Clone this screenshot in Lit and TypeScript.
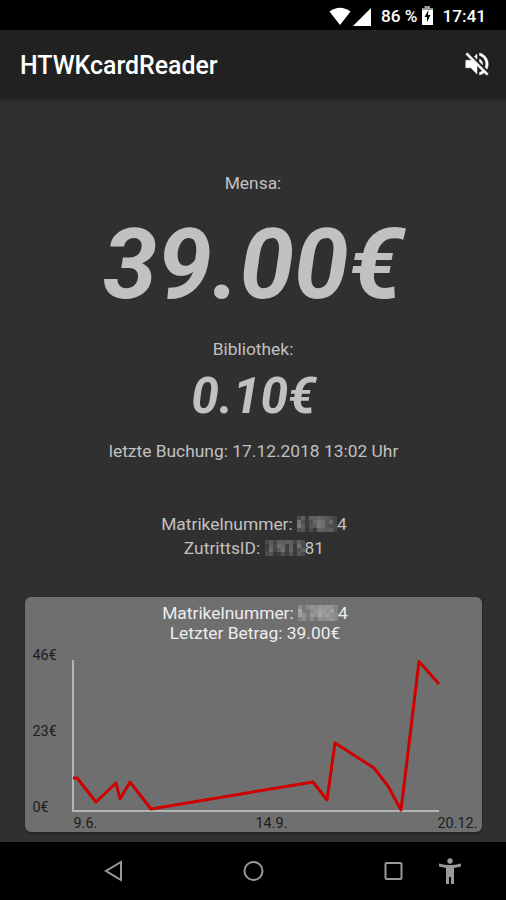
import { LitElement, html, svg, css } from "lit";
import { customElement, property } from "lit/decorators.js";

@customElement("pixel-mask")
class PixelMask extends LitElement {
  static styles = css`
    :host { display: inline-block; vertical-align: top; }
    svg { display: block; filter: blur(0.6px); }
  `;
  @property({ attribute: false }) rows: number[][] = [];
  @property({ type: Number }) cell = 4;
  render() {
    const w = (this.rows[0]?.length ?? 0) * this.cell;
    const h = this.rows.length * this.cell;
    return html`<svg width=${w} height=${h} viewBox="0 0 ${w} ${h}" shape-rendering="crispEdges">
      ${this.rows.map((r, y) => r.map((v, x) => svg`<rect x=${x * this.cell} y=${y * this.cell} width=${this.cell} height=${this.cell} fill="rgb(${v},${v},${v})"></rect>`))}
    </svg>`;
  }
}

const maskNumber = [
  [75, 95, 60, 95, 95, 105, 95, 90, 80, 70],
  [115, 80, 60, 80, 105, 115, 110, 85, 105, 70],
  [120, 95, 60, 85, 90, 120, 110, 85, 80, 75],
  [80, 85, 55, 75, 60, 100, 95, 90, 95, 70],
];
const maskAccess = [
  [75, 90, 70, 95, 90, 95, 95, 70, 95, 80],
  [60, 95, 75, 110, 100, 65, 95, 60, 110, 75],
  [65, 105, 70, 90, 110, 65, 100, 60, 80, 95],
  [75, 85, 55, 60, 80, 60, 85, 60, 90, 75],
];
const maskCard = [
  [140, 120, 140, 150, 140, 150, 145, 150, 145, 130],
  [165, 125, 120, 140, 150, 160, 155, 145, 160, 130],
  [160, 145, 125, 150, 145, 165, 150, 155, 145, 140],
  [130, 145, 120, 140, 120, 145, 140, 145, 150, 135],
];

@customElement("app-root")
class AppRoot extends LitElement {
  static styles = css`
    :host {
      display: flex; flex-direction: column; width: 506px; height: 900px; overflow: hidden;
      background: #303030; color: #c1c1c1; font-family: Roboto, "Liberation Sans", sans-serif;
      font-size: 17.4px; line-height: 20px;
    }
    svg { display: block; }
    .status {
      height: 30px; flex: none; background: #000; color: #fff; display: flex; align-items: center;
      justify-content: flex-end; box-sizing: border-box; padding: 1px 20px 0 0; font-weight: 500;
      font-size: 17.2px;
    }
    .signals { margin-right: 8px; }
    .battery { margin: 0 8px 0 4px; }
    .bar {
      height: 69px; flex: none; background: #212121; color: #fff; display: flex; align-items: center;
      justify-content: space-between; box-sizing: border-box; padding: 2px 14px 0 20px;
      box-shadow: 0 1px 3px rgba(0, 0, 0, 0.3);
    }
    .title { font-size: 24.9px; line-height: 30px; font-weight: 500; }
    .mute { margin-bottom: 4px; }
    .content { flex: 1; display: flex; flex-direction: column; align-items: center; padding-top: 74px; }
    .line { white-space: pre; display: flex; justify-content: center; }
    .mask { margin-top: 2px; }
    .amount { font-weight: 700; font-style: italic; white-space: nowrap; }
    .big { font-size: 98px; line-height: 110px; margin-top: 17px; }
    .small { font-size: 49.6px; line-height: 60px; margin-top: 7px; padding-left: 1px; }
    .library { margin-top: 19px; }
    .last { margin-top: 15px; padding-left: 1px; }
    .ids { margin-top: 51px; line-height: 24px; padding-left: 2px; }
    .ids .mask { margin-top: 4px; }
    .card {
      width: 457px; height: 235px; box-sizing: border-box; margin-top: 37px; border-radius: 6px;
      background: #6f6f6f; color: #ededed; padding-top: 6px; box-shadow: 0 1px 3px rgba(0, 0, 0, 0.4);
    }
    .card .line { padding-left: 4px; }
    .plot { display: grid; grid-template-columns: 48px 366px 43px; grid-template-rows: 153px 20px; margin-top: 17px; color: #1c1c1c; font-size: 14.4px; line-height: 18px; }
    .scale { display: flex; flex-direction: column; justify-content: space-between; padding-left: 8px; margin: -13px 0 -4px; }
    .chart { overflow: visible; grid-column: 2 / 4; }
    .dates { grid-column: 2 / 4; display: flex; justify-content: space-between; padding: 2px 4px 0 1px; white-space: nowrap; }
    .middle { margin-left: 8px; }
    .nav { flex: none; height: 58px; background: #000; }
  `;

  render() {
    return html`
      <div class="status">
        <svg class="signals" width="44" height="20" viewBox="0 0 44 20" fill="#fff">
          <path d="M0.5 5.5Q11 -2 21.5 5.5L11 19Z"></path>
          <path d="M42 2V20H24Z"></path>
        </svg>
        <span>86 %</span>
        <svg class="battery" width="13" height="19" viewBox="0 0 13 19">
          <path fill="#999" d="M3.5 0H9V2H12V5H1V2H3.5Z"></path>
          <path fill="#fff" d="M1 4H12V19H1Z"></path>
          <path fill="#000" d="M7.5 4L3.5 11H6V16L9.5 9H7Z"></path>
        </svg>
        <span>17:41</span>
      </div>
      <div class="bar">
        <div class="title">HTWKcardReader</div>
        <svg class="mute" width="30" height="30" viewBox="0 0 24 24" fill="#fff" stroke="#fff" stroke-width="0.35">
          <path d="M16.5 12c0-1.77-1.02-3.29-2.5-4.03v2.21l2.45 2.45c.03-.2.05-.41.05-.63zm2.5 0c0 .94-.2 1.82-.54 2.64l1.51 1.51C20.63 14.91 21 13.5 21 12c0-4.28-2.99-7.86-7-8.77v2.06c2.89.86 5 3.54 5 6.71zM4.27 3L3 4.27 7.73 9H3v6h4l5 5v-6.73l4.25 4.25c-.67.52-1.42.93-2.25 1.18v2.06c1.38-.31 2.63-.95 3.69-1.81L19.73 21 21 19.73l-9-9L4.27 3zM12 4L9.91 6.09 12 8.18V4z"></path>
        </svg>
      </div>
      <div class="content">
        <div>Mensa:</div>
        <div class="amount big">39.00€</div>
        <div class="library">Bibliothek:</div>
        <div class="amount small">0.10€</div>
        <div class="last">letzte Buchung: 17.12.2018 13:02 Uhr</div>
        <div class="ids">
          <div class="line">Matrikelnummer: <pixel-mask class="mask" .rows=${maskNumber}></pixel-mask>4</div>
          <div class="line">ZutrittsID: <pixel-mask class="mask" .rows=${maskAccess}></pixel-mask>81</div>
        </div>
        <div class="card">
          <div class="line">Matrikelnummer: <pixel-mask class="mask" .rows=${maskCard}></pixel-mask>4</div>
          <div class="line">Letzter Betrag: 39.00€</div>
          <div class="plot">
            <div class="scale"><span>46€</span><span>23€</span><span>0€</span></div>
            <svg class="chart" width="409" height="153" viewBox="0 0 409 153" fill="none">
              <path stroke="#b4b4b4" stroke-width="2" d="M0 0V151H366"></path>
              <path stroke="#cf0000" stroke-width="3" stroke-linejoin="round" d="M0 118H4L23 142L43 123L47 139L57 122L78 149L240 122L254 140L262 83L301 108L315 126L328 150L346 1.5L366 24"></path>
            </svg>
            <span></span>
            <div class="dates"><span>9.6.</span><span class="middle">14.9.</span><span>20.12.</span></div>
          </div>
        </div>
      </div>
      <svg class="nav" width="506" height="58" viewBox="0 0 506 58" fill="none" stroke="#999" stroke-width="2">
        <path d="M121 20V38L106 29Z"></path>
        <circle cx="253.5" cy="29" r="9"></circle>
        <rect x="385.5" y="21" width="16" height="16" rx="1"></rect>
        <g fill="#999" stroke="none">
          <circle cx="450" cy="19" r="2.7"></circle>
          <path d="M439 21.5Q450 24.5 461 21.5V24.5L454 26V42H451V35H449V42H446V26L439 24.5Z"></path>
        </g>
      </svg>
    `;
  }
}
